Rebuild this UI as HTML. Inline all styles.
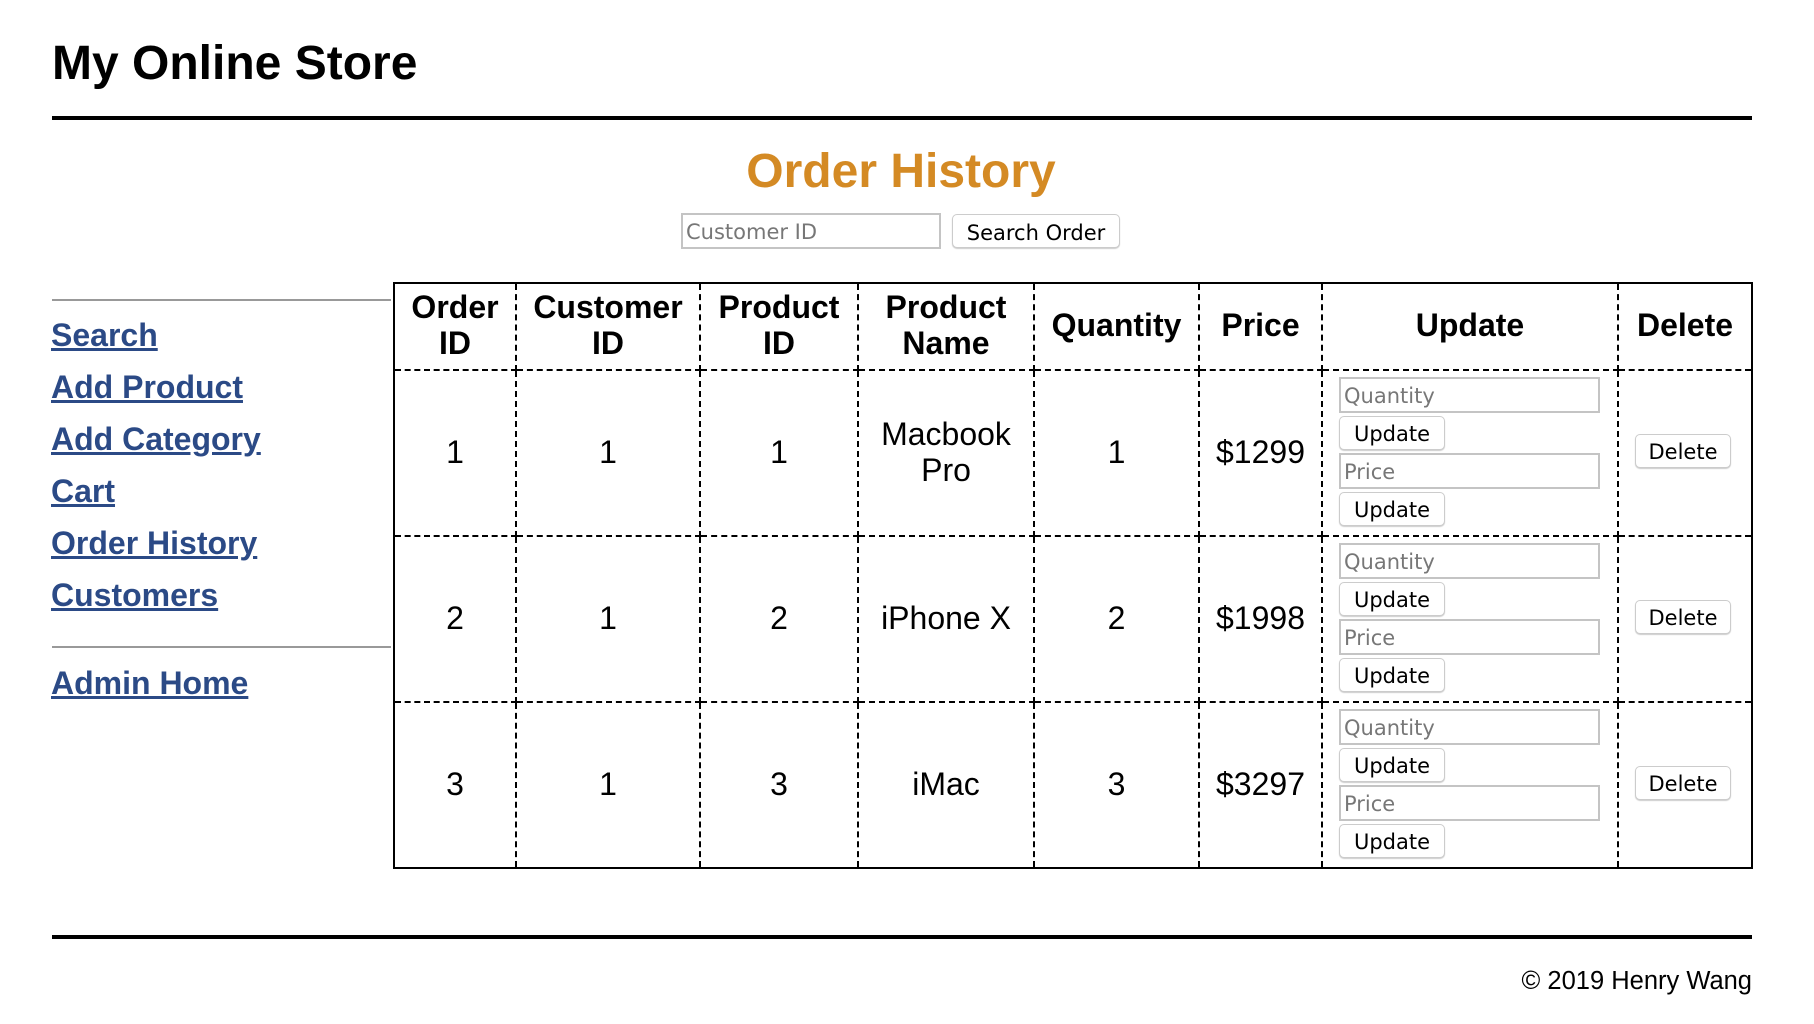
<!DOCTYPE html>
<html><head><meta charset="utf-8"><style>
*{margin:0;padding:0;box-sizing:border-box}
body{width:1814px;height:1024px;background:#fff;font-family:"Liberation Sans",Arial,sans-serif;position:relative;overflow:hidden;color:#000}
.abs{position:absolute}
h1{position:absolute;left:52px;top:36px;font-size:48px;font-weight:bold;line-height:56px}
.hr{position:absolute;left:52px;width:1700px;height:4px;background:#000}
h2{position:absolute;left:0;width:1802px;text-align:center;top:144px;font-size:48px;line-height:56px;color:#d48a24}
.inp{position:absolute;border:2px solid #c4c4c4;background:#fff;color:#777;line-height:34px;padding-left:3px;font-family:"DejaVu Sans","Liberation Sans",sans-serif;font-size:21px}
.btn{position:absolute;border:1px solid #ccc;border-radius:5px;background:#fff;box-shadow:0 1px 1px rgba(0,0,0,.2);text-align:center;line-height:34px;font-family:"DejaVu Sans","Liberation Sans",sans-serif;font-size:21px}
.gl{position:absolute;left:52px;width:339px;height:2px;background:#999}
a{position:absolute;left:51px;font-size:32px;font-weight:bold;color:#2b4a86;text-decoration:underline;line-height:36px}
table{position:absolute;left:393px;top:282px;width:1358px;border-collapse:collapse;table-layout:fixed;border:2px solid #000}
td,th{border:2px dashed #000;text-align:center;vertical-align:middle;font-size:32px;line-height:36px}
th{height:87px;padding-bottom:3px}
td{height:166px;padding-bottom:2px}
</style></head><body>
<h1>My Online Store</h1>
<div class="hr" style="top:116px"></div>
<h2>Order History</h2>
<div class="inp" style="left:681px;top:213px;width:260px;height:36px">Customer ID</div>
<div class="btn" style="left:952px;top:214px;width:168px;height:34px;line-height:36px">Search Order</div>

<div class="gl" style="top:299px"></div>
<a style="top:317px">Search</a>
<a style="top:369px">Add Product</a>
<a style="top:421px">Add Category</a>
<a style="top:473px">Cart</a>
<a style="top:525px">Order History</a>
<a style="top:577px">Customers</a>
<div class="gl" style="top:646px"></div>
<a style="top:665px">Admin Home</a>

<table>
<colgroup><col style="width:122px"><col style="width:184px"><col style="width:158px"><col style="width:176px"><col style="width:165px"><col style="width:123px"><col style="width:296px"><col style="width:134px"></colgroup>
<tr><th>Order<br>ID</th><th>Customer<br>ID</th><th>Product<br>ID</th><th>Product<br>Name</th><th>Quantity</th><th>Price</th><th>Update</th><th>Delete</th></tr>
<tr><td>1</td><td>1</td><td>1</td><td>Macbook<br>Pro</td><td>1</td><td>$1299</td><td></td><td></td></tr>
<tr><td>2</td><td>1</td><td>2</td><td>iPhone X</td><td>2</td><td>$1998</td><td></td><td></td></tr>
<tr><td>3</td><td>1</td><td>3</td><td>iMac</td><td>3</td><td>$3297</td><td></td><td></td></tr>
</table>

<div class="inp" style="left:1339px;top:377px;width:261px;height:36px">Quantity</div>
<div class="btn" style="left:1339px;top:416px;width:106px;height:34px">Update</div>
<div class="inp" style="left:1339px;top:453px;width:261px;height:36px">Price</div>
<div class="btn" style="left:1339px;top:492px;width:106px;height:34px">Update</div>
<div class="btn" style="left:1635px;top:434px;width:96px;height:34px">Delete</div>

<div class="inp" style="left:1339px;top:543px;width:261px;height:36px">Quantity</div>
<div class="btn" style="left:1339px;top:582px;width:106px;height:34px">Update</div>
<div class="inp" style="left:1339px;top:619px;width:261px;height:36px">Price</div>
<div class="btn" style="left:1339px;top:658px;width:106px;height:34px">Update</div>
<div class="btn" style="left:1635px;top:600px;width:96px;height:34px">Delete</div>

<div class="inp" style="left:1339px;top:709px;width:261px;height:36px">Quantity</div>
<div class="btn" style="left:1339px;top:748px;width:106px;height:34px">Update</div>
<div class="inp" style="left:1339px;top:785px;width:261px;height:36px">Price</div>
<div class="btn" style="left:1339px;top:824px;width:106px;height:34px">Update</div>
<div class="btn" style="left:1635px;top:766px;width:96px;height:34px">Delete</div>

<div class="hr" style="top:935px"></div>
<div class="abs" style="right:62px;top:966px;font-size:25.5px;line-height:30px">© 2019 Henry Wang</div>
</body></html>
